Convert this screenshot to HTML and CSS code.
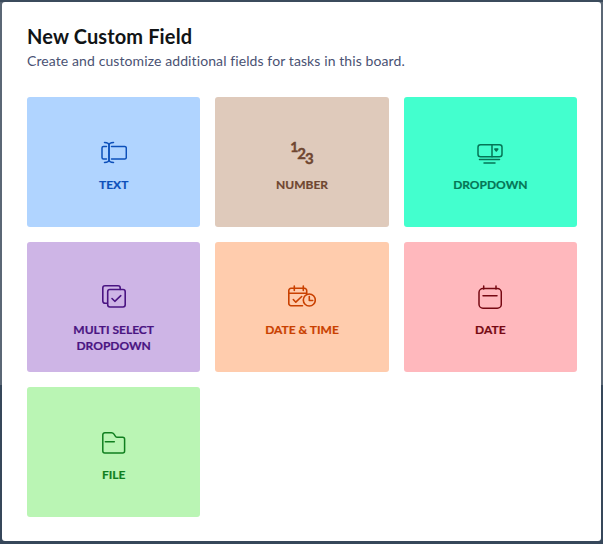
FILE: index.html
```html
<!DOCTYPE html>
<html lang="en">
<head>
<meta charset="utf-8">
<title>New Custom Field</title>
<link rel="stylesheet" href="styles.css">
</head>
<body>
<div class="backdrop">
  <main class="modal">
    <h1 class="title">New Custom Field</h1>
    <p class="subtitle">Create and customize additional fields for tasks in this board.</p>
    <div class="grid">
      <button class="card card-text">
        <svg class="icon" viewBox="0 0 26 24" width="26" height="24" fill="none" stroke="currentColor" stroke-width="1.500" stroke-linecap="round" stroke-linejoin="round"><path d="M10.500 6.500h13.300a1.500 1.500 0 0 1 1.500 1.500v9.500a1.500 1.500 0 0 1-1.500 1.500H10.500"/><path d="M5.500 6.500H2.500A1.500 1.500 0 0 0 1 8v9.500A1.500 1.500 0 0 0 2.500 19h3"/><path d="M3.500 2.500c2.500 0 4.500.8 4.500 3v14c0 2.200-2 3-4.500 3"/><path d="M12.500 2.500c-2.500 0-4.500.8-4.500 3v14c0 2.200 2 3 4.500 3"/></svg>
        <span class="label">TEXT</span>
      </button>
      <button class="card card-number">
        <span class="digits"><span class="d1">1</span><span class="d2">2</span><span class="d3">3</span></span>
        <span class="label">NUMBER</span>
      </button>
      <button class="card card-dropdown">
        <svg class="icon" viewBox="0 0 26 24" width="26" height="24" fill="none" stroke="currentColor" stroke-width="1.500" stroke-linecap="round" stroke-linejoin="round"><rect x="1" y="4.700" width="24" height="12" rx="2.500"/><path d="M15 4.700v12"/><path d="M17.800 9h3l-1.500 2z" fill="currentColor"/><path d="M2.500 19.500h20"/><path d="M7 23h11"/></svg>
        <span class="label">DROPDOWN</span>
      </button>
      <button class="card card-multi">
        <svg class="icon" viewBox="0 0 24 24" width="24" height="24" fill="none" stroke="currentColor" stroke-width="1.600" stroke-linecap="round" stroke-linejoin="round"><path d="M5 18.300H3a2.200 2.200 0 0 1-2.200-2.200V3A2.200 2.200 0 0 1 3 .8h13a2.200 2.200 0 0 1 2.200 2.200v1.500"/><rect x="5.700" y="4.500" width="17.500" height="17.500" rx="2.200"/><path d="M10 13.500l2.800 2.800 6-5.600"/></svg>
        <span class="label">MULTI SELECT<br>DROPDOWN</span>
      </button>
      <button class="card card-datetime">
        <svg class="icon" viewBox="0 0 28 24" width="28" height="24" fill="none" stroke="currentColor" stroke-width="1.600" stroke-linecap="round" stroke-linejoin="round"><path d="M14.500 20.700H3a2.200 2.200 0 0 1-2.200-2.200V5.500A2.200 2.200 0 0 1 3 3.300h13.500a2.200 2.200 0 0 1 2.200 2.200v3.500"/><path d="M1 8.300h17.500"/><path d="M6.300 1v4.500M15.300 1v4.500"/><path d="M5.300 14.500l2.500 2.700 5.900-5.700"/><circle cx="21.300" cy="15" r="6"/><path d="M21.300 11.500v4h3.400"/></svg>
        <span class="label">DATE &amp; TIME</span>
      </button>
      <button class="card card-date">
        <svg class="icon" viewBox="0 0 24 24" width="24" height="24" fill="none" stroke="currentColor" stroke-width="1.500" stroke-linecap="round" stroke-linejoin="round"><rect x="1" y="3.500" width="22.300" height="19.700" rx="4"/><path d="M5 10.700h14"/><path d="M5.700 1v3M18 1v3"/></svg>
        <span class="label">DATE</span>
      </button>
      <button class="card card-file">
        <svg class="icon" viewBox="0 0 24 24" width="24" height="24" fill="none" stroke="currentColor" stroke-width="1.500" stroke-linecap="round" stroke-linejoin="round"><path d="M.8 4.800a2 2 0 0 1 2-2h6.700c1.100 0 1.900.5 2.500 1.400l1.300 1.900c.5.800 1.200 1.200 2.200 1.200h5.100a2 2 0 0 1 2 2V21a2 2 0 0 1-2 2H2.800a2 2 0 0 1-2-2z"/><path d="M3.300 11.700h9"/></svg>
        <span class="label">FILE</span>
      </button>
    </div>
  </main>
</div>
</body>
</html>
```

FILE: styles.css
```css
* {
  box-sizing: border-box;
}

html,
body {
  margin: 0;
  height: 100%;
}

body {
  background: #36475a;
  font-family: Lato, "Liberation Sans", sans-serif;
  overflow: hidden;
}

.backdrop {
  width: 603px;
  height: 544px;
  padding: 2px 2px 3px 2px;
  background:
    linear-gradient(to bottom, #3b4b5c 0, #3b4b5c 2px, transparent 2px),
    linear-gradient(to bottom, #5b6775 0, #5b6775 385px, #36475a 385px);
}

.modal {
  height: 100%;
  background: #fff;
  border-radius: 3px;
  padding: 21px 24px 0 25px;
}

.title {
  margin: 0;
  font-size: 20px;
  line-height: 26px;
  font-weight: 700;
  letter-spacing: 0.13px;
  color: #111416;
}

.subtitle {
  margin: 2px 0 0;
  font-size: 14px;
  line-height: 20px;
  letter-spacing: 0.1px;
  color: #4a5273;
}

.grid {
  display: grid;
  grid-template-columns: repeat(3, 1fr);
  grid-auto-rows: 130px;
  gap: 15px;
  margin-top: 26px;
}

.card {
  display: flex;
  flex-direction: column;
  align-items: center;
  justify-content: flex-start;
  padding: 43px 0 0;
  border: 0;
  border-radius: 3px;
  font-family: inherit;
  text-align: center;
}

.icon {
  display: block;
  flex: none;
}

.label {
  margin-top: 13px;
  font-size: 12px;
  line-height: 16px;
  font-weight: 700;
  -webkit-text-stroke: 0.2px currentColor;
}

.digits {
  display: flex;
  height: 24px;
  align-items: flex-start;
  font-size: 15px;
  line-height: 14px;
  font-weight: 700;
  -webkit-text-stroke: 0.4px currentColor;
}

.d1 { font-size: 14px; }
.d2 { margin-top: 6px; margin-left: -1px; }
.d3 { margin-top: 10.500px; margin-left: -1px; }

.card-text { background: #b0d4ff; color: #0d50ba; }
.card-number { background: #dfcabb; color: #6f4630; }
.card-dropdown { background: #43ffce; color: #057556; }
.card-multi { background: #ceb5e6; color: #4a1482; }
.card-datetime { background: #ffccad; color: #c94000; }
.card-date { background: #ffb8bd; color: #760812; }
.card-file { background: #baf5b4; color: #107f1f; }
```
